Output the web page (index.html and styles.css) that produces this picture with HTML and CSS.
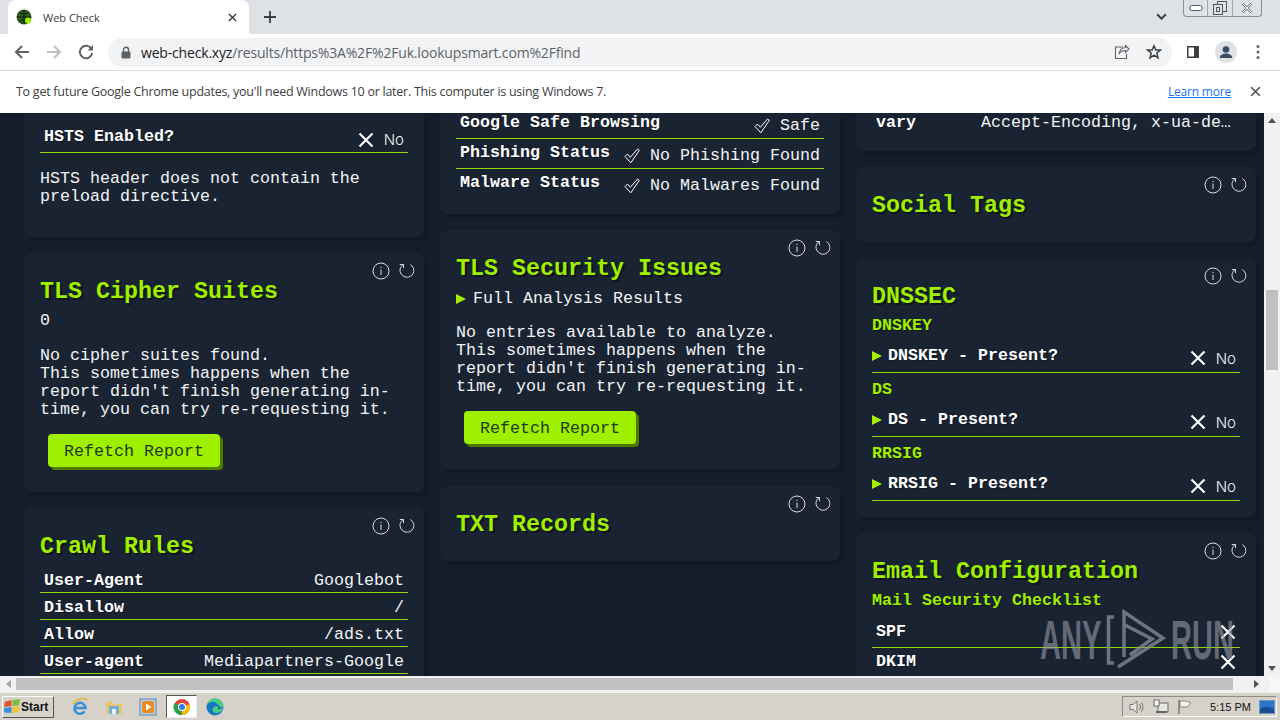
FILE: index.html
```html
<!DOCTYPE html>
<html lang="en">
<head>
<meta charset="utf-8">
<title>Web Check</title>
<link rel="stylesheet" href="styles.css">
</head>
<body>
<svg class="defs" width="0" height="0" aria-hidden="true">
  <symbol id="i-x" viewBox="0 0 16 16"><path d="M1.5 1.5 14.5 14.5M14.5 1.5 1.5 14.5" fill="none" stroke="#fff" stroke-width="2.2"/></symbol>
  <symbol id="i-check" viewBox="0 0 16 16"><path d="M1 8.500 3.500 6 6.300 9.300 13.500 1 15.300 2.300 6.800 14.800Z" fill="none" stroke="#fff" stroke-width="1"/></symbol>
  <symbol id="i-info" viewBox="0 0 18 18"><circle cx="9" cy="9" r="8" fill="none" stroke="#d8dade" stroke-width="1"/><path d="M9 7.5V13M9 4.8V6" stroke="#d8dade" stroke-width="1"/></symbol>
  <symbol id="i-refresh" viewBox="0 0 18 18"><path d="M5.5 2.5C2.5 4.2 1.5 7 2.2 9.8 3 13 6 15.4 9.3 15.2 13 15 15.8 12 15.8 8.6 15.8 6 14.4 3.800 12.300 2.600M5.500 6.200V2.500H1.800" fill="none" stroke="#d8dade" stroke-width="1"/></symbol>
</svg>

<header class="tabbar">
  <div class="tab">
    <svg class="favicon" viewBox="0 0 16 16"><circle cx="8" cy="8" r="7.500" fill="#2f5d1e"/><path d="M1 8h14M8 1v14M3 3.500c3 2 7 2 10 0M3 12.500c3-2 7-2 10 0" stroke="#0d1a10" stroke-width="1" fill="none"/><circle cx="12" cy="11.500" r="3" fill="#9fef00"/></svg>
    <span class="tab-title">Web Check</span>
    <svg class="tab-close" viewBox="0 0 10 10"><path d="M1 1 9 9M9 1 1 9" stroke="#3c4043" stroke-width="1.600"/></svg>
  </div>
  <svg class="newtab" viewBox="0 0 12 12"><path d="M6 0V12M0 6H12" stroke="#3c4043" stroke-width="1.800"/></svg>
  <svg class="chevron" viewBox="0 0 10 6"><path d="M1 1 5 5 9 1" fill="none" stroke="#3c4043" stroke-width="1.800"/></svg>
  <div class="winctl">
    <span class="winbtn"><svg viewBox="0 0 14 8" width="14" height="8"><rect x="1" y="1.500" width="12" height="5" rx="1.500" fill="#fff" stroke="#555"/></svg></span>
    <span class="winbtn"><svg viewBox="0 0 14 14" width="14" height="14"><rect x="4.500" y="0.500" width="9" height="10" fill="none" stroke="#555"/><rect x="0.500" y="3.500" width="9" height="10" fill="#dee1e6" stroke="#555"/><rect x="3.500" y="6.500" width="3" height="4" fill="none" stroke="#555"/></svg></span>
    <span class="winbtn winbtn-close"><svg viewBox="0 0 12 12" width="12" height="12"><path d="M1.500 1.500 10.500 10.500M10.500 1.500 1.500 10.500" stroke="#777" stroke-width="2.400"/><path d="M1.500 1.500 10.500 10.500M10.500 1.500 1.500 10.500" stroke="#fff" stroke-width="1"/></svg></span>
  </div>
</header>

<nav class="toolbar">
  <svg class="tool" viewBox="0 0 16 16"><path d="M15 8H2M8 2 2 8 8 14" fill="none" stroke="#5f6368" stroke-width="2"/></svg>
  <svg class="tool tool-fwd" viewBox="0 0 16 16"><path d="M1 8H14M8 2 14 8 8 14" fill="none" stroke="#bcc0c4" stroke-width="2"/></svg>
  <svg class="tool tool-reload" viewBox="0 0 16 16"><path d="M13.500 5A6.200 6.200 0 1 0 14.200 9" fill="none" stroke="#5f6368" stroke-width="2"/><path d="M15 1V6.500H9.500Z" fill="#5f6368"/></svg>
  <div class="omnibox">
    <svg class="lock" viewBox="0 0 10 13"><path d="M2.500 6V3.800a2.500 2.500 0 0 1 5 0V6" fill="none" stroke="#5f6368" stroke-width="1.400"/><rect x="0.500" y="5.500" width="9" height="7" rx="1" fill="#5f6368"/></svg>
    <span class="url"><b class="host">web-check.xyz</b>/results/https%3A%2F%2Fuk.lookupsmart.com%2Ffind</span>
    <svg class="omni-icon" viewBox="0 0 16 16"><path d="M11.500 1.500 15 5 11.500 8.500V6.500C8.500 6.500 6.500 7.500 5 10 5.500 6.500 7.500 4 11.500 3.500Z M9 3H1.500V14.500H12.500V10" fill="none" stroke="#5f6368" stroke-width="1.100"/></svg>
    <svg class="omni-icon omni-star" viewBox="0 0 16 16"><path d="M8 1.800 9.800 6H14.500L10.800 9 12 13.800 8 11.200 4 13.800 5.200 9 1.500 6H6.200Z" fill="none" stroke="#3c4043" stroke-width="1.500"/></svg>
  </div>
  <svg class="tool tool-side" viewBox="0 0 14 14"><rect x="1" y="1" width="12" height="12" fill="#3c4043"/><rect x="2.500" y="2.500" width="5.500" height="9" fill="#fff"/></svg>
  <svg class="avatar" viewBox="0 0 22 22"><circle cx="11" cy="11" r="11" fill="#dfe1e5"/><circle cx="11" cy="8.500" r="3.300" fill="#3b4a63"/><path d="M4.800 17c0-3 3-4.500 6.200-4.500s6.200 1.500 6.200 4.500Z" fill="#3b4a63"/></svg>
  <svg class="tool tool-menu" viewBox="0 0 4 16"><circle cx="2" cy="2.500" r="1.500" fill="#5f6368"/><circle cx="2" cy="8" r="1.500" fill="#5f6368"/><circle cx="2" cy="13.500" r="1.500" fill="#5f6368"/></svg>
</nav>

<aside class="infobar">
  <span class="info-text">To get future Google Chrome updates, you'll need Windows 10 or later. This computer is using Windows 7.</span>
  <a class="learn" href="#">Learn more</a>
  <svg class="info-close" viewBox="0 0 10 10"><path d="M1 1 9 9M9 1 1 9" stroke="#5f6368" stroke-width="1.600"/></svg>
</aside>

<div class="viewport">
  <main class="page">
    <section class="column col-a">
      <article class="card card-cut card-hsts">
        <div class="row row-hsts"><span class="label">HSTS Enabled?</span><span class="value"><svg class="x"><use href="#i-x"/></svg><span class="no">No</span></span></div>
        <p class="para para-gap">HSTS header does not contain the<br>preload directive.</p>
      </article>
      <article class="card">
        <div class="actions"><svg class="act"><use href="#i-info"/></svg><svg class="act"><use href="#i-refresh"/></svg></div>
        <h2 class="title">TLS Cipher Suites</h2>
        <p class="para">0</p>
        <p class="para para-gap">No cipher suites found.<br>This sometimes happens when the<br>report didn't finish generating in-<br>time, you can try re-requesting it.</p>
        <button class="refetch">Refetch Report</button>
      </article>
      <article class="card card-open">
        <div class="actions"><svg class="act"><use href="#i-info"/></svg><svg class="act"><use href="#i-refresh"/></svg></div>
        <h2 class="title">Crawl Rules</h2>
        <div class="row row-crawl"><span class="label">User-Agent</span><span class="value">Googlebot</span></div>
        <div class="row row-crawl"><span class="label">Disallow</span><span class="value">/</span></div>
        <div class="row row-crawl"><span class="label">Allow</span><span class="value">/ads.txt</span></div>
        <div class="row row-crawl"><span class="label">User-agent</span><span class="value">Mediapartners-Google</span></div>
      </article>
    </section>

    <section class="column col-b">
      <article class="card card-cut card-safe">
        <div class="row row-safe row-first"><span class="label">Google Safe Browsing</span><span class="value"><svg class="check"><use href="#i-check"/></svg>Safe</span></div>
        <div class="row row-safe"><span class="label">Phishing Status</span><span class="value"><svg class="check"><use href="#i-check"/></svg>No Phishing Found</span></div>
        <div class="row row-safe row-last"><span class="label">Malware Status</span><span class="value"><svg class="check"><use href="#i-check"/></svg>No Malwares Found</span></div>
      </article>
      <article class="card">
        <div class="actions"><svg class="act"><use href="#i-info"/></svg><svg class="act"><use href="#i-refresh"/></svg></div>
        <h2 class="title">TLS Security Issues</h2>
        <p class="para summary"><span class="arrow"></span>Full Analysis Results</p>
        <p class="para para-gap">No entries available to analyze.<br>This sometimes happens when the<br>report didn't finish generating in-<br>time, you can try re-requesting it.</p>
        <button class="refetch">Refetch Report</button>
      </article>
      <article class="card">
        <div class="actions"><svg class="act"><use href="#i-info"/></svg><svg class="act"><use href="#i-refresh"/></svg></div>
        <h2 class="title">TXT Records</h2>
      </article>
    </section>

    <section class="column col-c">
      <article class="card card-cut card-vary">
        <div class="row row-vary"><span class="label">vary</span><span class="value value-cut">Accept-Encoding, x-ua-de…</span></div>
      </article>
      <article class="card">
        <div class="actions"><svg class="act"><use href="#i-info"/></svg><svg class="act"><use href="#i-refresh"/></svg></div>
        <h2 class="title">Social Tags</h2>
      </article>
      <article class="card card-dnssec">
        <div class="actions"><svg class="act"><use href="#i-info"/></svg><svg class="act"><use href="#i-refresh"/></svg></div>
        <h2 class="title title-tight">DNSSEC</h2>
        <h3 class="sub">DNSKEY</h3>
        <div class="row row-dns"><span class="label"><span class="arrow"></span>DNSKEY - Present?</span><span class="value"><svg class="x"><use href="#i-x"/></svg><span class="no">No</span></span></div>
        <h3 class="sub sub-next">DS</h3>
        <div class="row row-dns"><span class="label"><span class="arrow"></span>DS - Present?</span><span class="value"><svg class="x"><use href="#i-x"/></svg><span class="no">No</span></span></div>
        <h3 class="sub sub-next">RRSIG</h3>
        <div class="row row-dns"><span class="label"><span class="arrow"></span>RRSIG - Present?</span><span class="value"><svg class="x"><use href="#i-x"/></svg><span class="no">No</span></span></div>
      </article>
      <article class="card card-open">
        <div class="actions"><svg class="act"><use href="#i-info"/></svg><svg class="act"><use href="#i-refresh"/></svg></div>
        <h2 class="title">Email Configuration</h2>
        <h3 class="sub">Mail Security Checklist</h3>
        <div class="row row-mail"><span class="label">SPF</span><svg class="x x-mail"><use href="#i-x"/></svg></div>
        <div class="row row-mail row-mail2"><span class="label">DKIM</span><svg class="x x-mail"><use href="#i-x"/></svg></div>
      </article>
    </section>

    <div class="watermark">
      <span class="wm-text">ANY</span>
      <svg class="wm-logo" viewBox="0 0 60 62"><path d="M8 8H2.500V54H8M18 48V3L57 29 12 58M17 15 46 30 24 46" fill="none" stroke="#8a8f99" stroke-opacity=".75" stroke-width="3.500"/></svg>
      <span class="wm-text">RUN</span>
    </div>
  </main>
  <div class="vscroll">
    <span class="arr arr-up"></span>
    <span class="vthumb"></span>
    <span class="arr arr-down"></span>
  </div>
</div>

<div class="hscroll">
  <span class="arr arr-left"></span>
  <span class="hthumb"></span>
  <span class="arr arr-right"></span>
  <span class="corner"></span>
</div>

<footer class="taskbar">
  <button class="start">
    <svg class="flag" viewBox="0 0 18 16"><path d="M1 3 8 1 8 7.500 0 8.500Z" fill="#e0562b"/><path d="M9 1 17 0 16 6.500 9 7.500Z" fill="#7fba3a"/><path d="M0 9.500 8 8.500 8 15 0 14.500Z" fill="#3a8fdc"/><path d="M9 8.500 16 7.500 15 14.500 9 15Z" fill="#f3c02f"/></svg>
    <span>Start</span>
  </button>
  <div class="quick">
    <svg class="task-ic" viewBox="0 0 18 18"><path d="M4 10H14.500A5.500 5.500 0 1 0 13.500 13.500" fill="none" stroke="#3a8fdc" stroke-width="2.600"/><path d="M2 6C5 1 13-1 16 2" fill="none" stroke="#e5b52b" stroke-width="1.500"/></svg>
    <svg class="task-ic" viewBox="0 0 18 18"><path d="M1 4H7L8.500 6H17V16H1Z" fill="#e9c66c"/><rect x="4" y="8" width="10" height="8" fill="#6fb0d8"/><rect x="7" y="11" width="4" height="5" fill="#e9f2f7"/></svg>
    <svg class="task-ic" viewBox="0 0 18 18"><rect x="1" y="1" width="16" height="16" fill="#b8cfe6" stroke="#5c86b3"/><rect x="3" y="3" width="12" height="12" rx="2" fill="#ec8a1c"/><path d="M7 5.500 12.500 9 7 12.500Z" fill="#fff"/></svg>
    <span class="task-active"><svg class="task-ic" viewBox="0 0 18 18"><circle cx="9" cy="9" r="8" fill="#dc4437"/><path d="M9 9 16.500 6A8 8 0 0 1 9 17Z" fill="#f4c20d"/><path d="M9 9 9 17A8 8 0 0 1 1.500 5Z" fill="#2d9f4a"/><circle cx="9" cy="9" r="4" fill="#fff"/><circle cx="9" cy="9" r="3" fill="#3b78e7"/></svg></span>
    <svg class="task-ic" viewBox="0 0 18 18"><circle cx="9" cy="9" r="8.500" fill="#1477c4"/><path d="M17 11C15 15 10 16 7.500 14 5.500 12 6.500 9 9.500 8.500 12 8 13.500 10 11 11.500 14 12 17 10.500 17 8 17 3 12 .5 9 .5 5 .5 1.500 3 1 7 3 4 6 3.500 9 4" fill="#4cd07d"/></svg>
  </div>
  <div class="tray">
    <svg class="tray-ic" viewBox="0 0 16 16"><path d="M1 5.500H4L8 2V14L4 10.500H1Z" fill="#e8e6e0" stroke="#777"/><path d="M10.500 5C11.800 7 11.800 9 10.500 11M12.500 3.500C14.500 6.500 14.500 9.500 12.500 12.500" fill="none" stroke="#777"/></svg>
    <svg class="tray-ic" viewBox="0 0 16 16"><rect x="5" y="4" width="10" height="9" fill="#e8e6e0" stroke="#666"/><rect x="1" y="1" width="5" height="6" fill="#fff" stroke="#666"/><path d="M3 13H14" stroke="#666" stroke-width="2"/></svg>
    <svg class="tray-ic" viewBox="0 0 16 16"><path d="M2 1V15" stroke="#777" stroke-width="1.500"/><path d="M3 2H9L14 4 10 8H3Z" fill="#f4f2ec" stroke="#888"/></svg>
    <span class="clock">5:15 PM</span>
    <svg class="desk" viewBox="0 0 16 14"><rect x="0.500" y="0.500" width="15" height="13" fill="#2b76c9" stroke="#6b94bf"/><path d="M1 9C5 6 10 6 15 9V13H1Z" fill="#1b4f94"/></svg>
  </div>
</footer>
</body>
</html>
```
FILE: styles.css
```css
* { box-sizing: border-box; }
html, body { margin: 0; height: 100%; }
body {
  width: 1280px;
  height: 720px;
  overflow: hidden;
  display: flex;
  flex-direction: column;
  font-family: "Liberation Sans", Arial, sans-serif;
  background: #141d2b;
}
.defs { position: absolute; }

/* browser chrome */
.tabbar {
  height: 34px;
  flex: none;
  background: #dee1e6;
  display: flex;
  align-items: flex-start;
  padding-left: 8px;
}
.tab {
  width: 241px;
  height: 34px;
  background: #fff;
  border-radius: 8px 8px 0 0;
  display: flex;
  align-items: center;
  padding: 0 11px 0 8px;
}
.favicon { width: 16px; height: 16px; flex: none; }
.tab-title { font-size: 11px; color: #3c4043; margin-left: 11px; flex: 1; font-family: "Open Sans", sans-serif; }
.tab-close { width: 9px; height: 9px; margin-right: 1px; }
.newtab { width: 12px; height: 12px; margin: 11px 0 0 15px; }
.chevron { width: 11px; height: 7px; margin: 13px 0 0 880px; }
.winctl {
  display: flex;
  width: 79px;
  height: 17px;
  margin-left: 16px;
  border: 1px solid #8a8d92;
  border-top: 0;
  border-radius: 0 0 4px 4px;
}
.winbtn { flex: 1; display: flex; align-items: center; justify-content: center; border-right: 1px solid #a4a7ab; }
.winbtn-close { flex: 1.2; border-right: 0; }

.toolbar {
  height: 37px;
  flex: none;
  background: #fff;
  border-bottom: 1px solid #dadce0;
  display: flex;
  align-items: center;
  padding-left: 14px;
}
.tool { width: 16px; height: 16px; flex: none; }
.tool-fwd { margin-left: 16px; }
.tool-reload { margin-left: 16px; }
.omnibox {
  width: 1064px;
  height: 29px;
  margin-left: 14px;
  border-radius: 15px;
  background: #f1f3f4;
  display: flex;
  align-items: center;
  padding-left: 13px;
}
.lock { width: 10px; height: 13px; flex: none; }
.url { font-size: 14px; color: #5f6368; margin-left: 10px; flex: 1; font-family: "Open Sans", sans-serif; letter-spacing: -0.18px; }
.host { font-weight: 400; color: #202124; }
.omni-icon { width: 16px; height: 16px; flex: none; }
.omni-star { margin: 0 10px 0 16px; }
.tool-side { width: 14px; height: 14px; margin-left: 14px; }
.avatar { width: 22px; height: 22px; margin-left: 15px; flex: none; }
.tool-menu { width: 4px; height: 16px; margin-left: 19px; }

.infobar {
  height: 42px;
  flex: none;
  background: #fff;
  display: flex;
  align-items: center;
  padding: 0 19px 2px 16px;
  font-size: 12.500px;
  color: #3c4043;
  font-family: "Open Sans", sans-serif;
}
.info-text { flex: 1; letter-spacing: -0.26px; }
.learn { color: #1a73e8; font-size: 12px; letter-spacing: -0.2px; }
.info-close { width: 11px; height: 11px; margin-left: 19px; }

/* page */
.viewport { height: 563px; flex: none; display: flex; }
.page {
  flex: 1;
  position: relative;
  overflow: hidden;
  background: #141d2b;
  display: grid;
  grid-template-columns: repeat(3, 400px);
  column-gap: 16px;
  padding-left: 24px;
  font-family: "Liberation Mono", monospace;
  font-size: 16.67px;
  color: #f2f3f4;
}
.column { display: flex; flex-direction: column; min-width: 0; }
.col-a { gap: 16px; }
.col-b { gap: 16.500px; }
.col-c { gap: 16.500px; }
.card {
  position: relative;
  flex: none;
  background: #1a2332;
  border-radius: 8px;
  padding: 16px 16px 17px;
  box-shadow: 4px 4px 0 rgba(0,0,0,.12);
}
.card-cut { border-radius: 0 0 8px 8px; padding-top: 0; }
.card-open { border-radius: 8px 8px 0 0; padding-bottom: 0; flex: 1; }
.card-hsts { height: 124px; }
.card-safe { height: 100.500px; }
.card-vary { height: 37.750px; }
.card-dnssec { height: 258px; }

.actions { position: absolute; top: 9px; right: 8px; display: flex; gap: 8px; }
.card-dnssec .actions { top: 8px; }
.act { width: 18px; height: 18px; }

.title {
  margin: 0;
  height: 42px;
  font: 700 23.330px/46px "Liberation Mono", monospace;
  color: #9fef00;
  text-shadow: 2px 2px 0 rgba(0,0,0,.45);
}
.title-tight { margin-top: -1px; }
.sub {
  margin: 0;
  height: 18px;
  font: 700 16.670px/20px "Liberation Mono", monospace;
  color: #9fef00;
  text-shadow: 1px 1px 0 rgba(0,0,0,.4);
}
.sub-next { margin-top: 7px; }
.para { margin: 1px 0 0; line-height: 18px; }
.para-gap { margin-top: 17px; }
.summary { display: flex; align-items: center; margin-top: 2px; }
.summary + .para-gap { margin-top: 16px; }
.arrow {
  display: inline-block;
  flex: none;
  width: 0;
  height: 0;
  border-left: 10px solid #9fef00;
  border-top: 5px solid transparent;
  border-bottom: 5px solid transparent;
  margin-right: 7px;
}

.refetch {
  display: block;
  margin: 15px 0 8px 8px;
  width: 172px;
  height: 33px;
  padding: 2px 0 0;
  border: 0;
  border-radius: 4px;
  background: #9fef00;
  box-shadow: 3px 3px 0 #4f7a00;
  color: #1f3a22;
  font: 400 16.670px/31px "Liberation Mono", monospace;
}

.row {
  display: flex;
  justify-content: space-between;
  align-items: flex-start;
  border-bottom: 1px solid #8fd800;
  padding: 0 4px;
}
.row .label { font-weight: 700; line-height: 18px; color: #fff; text-shadow: 1px 1px 0 rgba(0,0,0,.3); }
.row .value { line-height: 18px; display: flex; align-items: center; white-space: nowrap; }
.row-hsts { height: 40px; padding-top: 15px; }
.row-hsts .value { margin-top: 3px; }
.x { width: 16px; height: 16px; flex: none; margin: -1px 10px 0 0; }
.no { font: 300 15px/18px "Inter", "Open Sans", sans-serif; }
.row-safe { height: 30px; padding-top: 5px; }
.row-safe .value { margin-top: 3px; }
.row-first { height: 26px; padding-top: 1px; }
.row-last { border-bottom: 0; }
.check { width: 16px; height: 16px; margin-right: 10px; flex: none; }
.row-crawl { height: 27px; padding-top: 6px; }
.row-vary { border-bottom: 0; padding-top: 1px; justify-content: flex-start; }
.row .value-cut { display: block; margin-left: 65px; }
.row-dns { height: 39px; padding: 13px 4px 0 0; }
.row-dns .label { display: flex; align-items: center; }
.row-dns .value { margin-top: 3px; }
.row-dns .arrow { margin-right: 6px; }
.row-mail { height: 39px; padding-top: 14px; }
.row-mail2 { height: 30px; padding-top: 5px; border-bottom: 0; }
.x-mail { margin: 1px 0 0; }

.watermark {
  position: absolute;
  left: 1040px;
  top: 497px;
  width: 195px;
  height: 60px;
  display: flex;
  align-items: center;
  gap: 8px;
  pointer-events: none;
}
.wm-text {
  font: 700 56px/60px "Liberation Sans", sans-serif;
  color: rgba(150,155,165,.6);
  width: 58px;
  transform: scaleX(.52);
  transform-origin: left center;
  white-space: nowrap;
}
.wm-logo { width: 60px; height: 62px; flex: none; margin-right: -3px; }

/* scrollbars */
.vscroll {
  width: 16px;
  flex: none;
  background: #f1f1f1;
  position: relative;
  display: flex;
  flex-direction: column;
  align-items: center;
  justify-content: space-between;
  padding: 5px 0;
}
.vthumb { position: absolute; left: 2px; top: 177px; width: 12px; height: 80px; background: #c1c1c1; }
.arr { width: 0; height: 0; display: block; border: 4px solid transparent; }
.arr-up { border-bottom: 5px solid #505050; border-top: 0; }
.arr-down { border-top: 5px solid #505050; border-bottom: 0; }
.arr-left { border-right: 5px solid #a3a3a3; border-left: 0; }
.arr-right { border-left: 5px solid #505050; border-right: 0; }
.hscroll {
  height: 16px;
  flex: none;
  background: #f1f1f1;
  display: flex;
  align-items: center;
  padding-left: 6px;
}
.hthumb { width: 1217px; height: 12px; margin-left: 5px; background: #c1c1c1; }
.hscroll .arr-right { margin-left: 21px; }
.corner { flex: 1; align-self: stretch; margin-left: 10px; background: #f7f7f7; }

/* taskbar */
.taskbar {
  flex: 1;
  background: #d6d2ca;
  border-top: 1px solid #f4f3ee;
  display: flex;
  align-items: center;
  padding: 0 3px 0 2px;
}
.start {
  width: 52px;
  height: 22px;
  padding: 0 0 0 1px;
  display: flex;
  align-items: center;
  gap: 0;
  background: #d6d2ca;
  border: 1px solid;
  border-color: #fff #555 #555 #fff;
  font: 700 12px "Liberation Sans", sans-serif;
  color: #111;
}
.flag { width: 17px; height: 15px; }
.quick { display: flex; align-items: center; margin-left: 17px; flex: 1; gap: 16px; }
.task-ic { width: 18px; height: 18px; flex: none; }
.task-active {
  width: 31px;
  height: 23px;
  margin: 0 -7px;
  background: #fff;
  border: 1px solid;
  border-color: #555 #eee #eee #555;
  display: flex;
  align-items: center;
  justify-content: center;
}
.tray {
  width: 155px;
  height: 21px;
  display: flex;
  align-items: center;
  border: 1px solid;
  border-color: #8f8c85 #fff #fff #8f8c85;
  padding: 0 1px 0 6px;
  gap: 8px;
}
.tray-ic { width: 16px; height: 16px; flex: none; }
.clock { font-size: 11px; color: #111; margin-left: 9px; flex: 1; white-space: nowrap; }
.desk { width: 16px; height: 14px; flex: none; }
```
